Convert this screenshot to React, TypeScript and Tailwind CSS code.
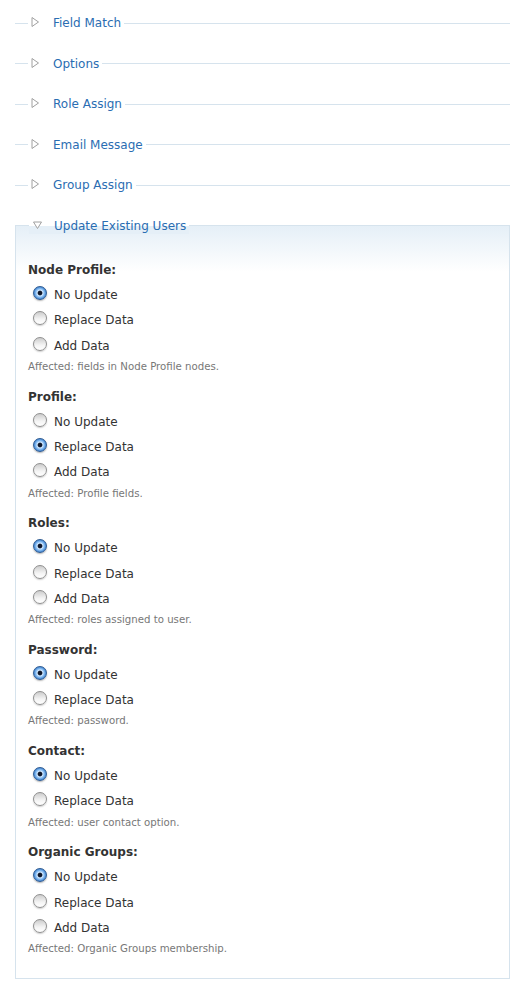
const collapsed = ["Field Match", "Options", "Role Assign", "Email Message", "Group Assign"]

const groups = [
  { label: "Node Profile:", options: ["No Update", "Replace Data", "Add Data"], sel: 0, note: "Affected: fields in Node Profile nodes." },
  { label: "Profile:", options: ["No Update", "Replace Data", "Add Data"], sel: 1, note: "Affected: Profile fields." },
  { label: "Roles:", options: ["No Update", "Replace Data", "Add Data"], sel: 0, note: "Affected: roles assigned to user." },
  { label: "Password:", options: ["No Update", "Replace Data"], sel: 0, note: "Affected: password." },
  { label: "Contact:", options: ["No Update", "Replace Data"], sel: 0, note: "Affected: user contact option." },
  { label: "Organic Groups:", options: ["No Update", "Replace Data", "Add Data"], sel: 0, note: "Affected: Organic Groups membership." },
]

function Triangle({ open }: { open?: boolean }) {
  return open ? (
    <svg width="9" height="8" viewBox="0 0 9 8" className="block">
      <path d="M0.5 1 L8.5 1 L4.5 7.5 Z" fill="white" stroke="#a0a0a0" strokeWidth="1" strokeLinejoin="round" />
    </svg>
  ) : (
    <svg width="8" height="10" viewBox="0 0 8 10" className="block">
      <path d="M1 0.5 L7.5 5 L1 9.5 Z" fill="white" stroke="#a0a0a0" strokeWidth="1" strokeLinejoin="round" />
    </svg>
  )
}

function Radio({ checked }: { checked: boolean }) {
  return checked ? (
    <span className="block w-[14px] h-[14px] rounded-full border border-[#2c5a92] bg-[radial-gradient(circle_at_50%_50%,#0f172a_0,#0f172a_1.9px,#cfe7ff_2.8px,#78b2ec_4.6px,#2a6cc0_7px)] shadow-[0_1px_1.5px_rgba(0,0,0,0.3)]" />
  ) : (
    <span className="block w-[14px] h-[14px] rounded-full border border-[#8f8f8f] bg-[linear-gradient(to_bottom,#cdcdcd,#f4f4f4_60%,#ffffff)] shadow-[0_1px_1.5px_rgba(0,0,0,0.2)]" />
  )
}

export default function App() {
  return (
    <div className="bg-white min-h-[992px] pt-[15px] text-[12px] text-[#333]" style={{ fontFamily: '"DejaVu Sans", Verdana, sans-serif' }}>
      <div className="mx-[15px]">
        {collapsed.map((t) => (
          <div key={t} className="h-[40.6px]">
            <div className="flex h-4 items-center">
              <div className="w-[13px] h-px bg-[#d6e3ed]" />
              <div className="flex items-center pl-[3px] pr-[3px]">
                <span className="mb-[2px]">
                  <Triangle />
                </span>
                <span className="ml-[14px] text-[#2a6db2]">{t}</span>
              </div>
              <div className="flex-1 h-px bg-[#d6e3ed]" />
            </div>
          </div>
        ))}

        <div className="mt-[7px] border border-[#d6e3ed] bg-[linear-gradient(to_bottom,#e5eff7,#ffffff_46px)] pb-[21px]">
          <div className="-mt-[7.5px] -mx-px flex h-4 items-center">
            <div className="w-[14px]" />
            <div className="flex h-4 items-center pl-[4px] pr-[3px] bg-[linear-gradient(to_bottom,#ffffff_50%,#e5eff7_50%)]">
              <span className="mb-[2px]">
                <Triangle open />
              </span>
              <span className="ml-[12px] text-[#2a6db2]">Update Existing Users</span>
            </div>
            <div className="flex-1" />
          </div>

          <div className="pl-[12px] pt-[23px]">
            {groups.map((g, gi) => (
              <div key={g.label} className={gi < groups.length - 1 ? "mb-[9px]" : ""}>
                <div className="h-[25px] flex items-center font-bold">{g.label}</div>
                {g.options.map((o, oi) => (
                  <div key={o} className="h-[25.3px] flex items-center">
                    <span className="ml-[5px] mb-[4px]">
                      <Radio checked={oi === g.sel} />
                    </span>
                    <span className="ml-[7px]">{o}</span>
                  </div>
                ))}
                <div className="h-[16.7px] flex items-center text-[10.2px] text-[#777]">{g.note}</div>
              </div>
            ))}
          </div>
        </div>
      </div>
    </div>
  )
}
